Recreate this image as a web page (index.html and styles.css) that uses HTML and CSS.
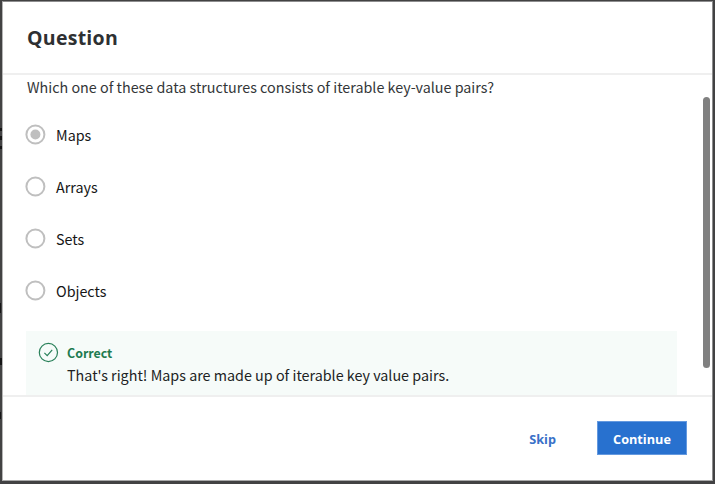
FILE: index.html
```html
<!DOCTYPE html>
<html lang="en">
<head>
<meta charset="utf-8">
<title>Question</title>
<link rel="stylesheet" href="styles.css">
</head>
<body>
<div class="backdrop" aria-hidden="true">
  <i class="mark mark-a"></i>
  <i class="mark mark-b"></i>
  <i class="mark mark-c"></i>
  <i class="mark mark-d"></i>
  <i class="mark mark-e"></i>
  <i class="mark mark-f"></i>
</div>
<section class="modal" role="dialog" aria-labelledby="title">
  <header class="header"><h1 class="title" id="title">Question</h1></header>
  <main class="body">
    <p class="prompt">Which one of these data structures consists of iterable key-value pairs?</p>
    <ul class="options">
      <li class="option"><svg class="radio" viewBox="0 0 21 21" width="21" height="21"><circle class="ring" cx="10.4" cy="10.5" r="9"/><circle class="dot" cx="10.4" cy="10.5" r="5"/></svg><span class="label">Maps</span></li>
      <li class="option"><svg class="radio" viewBox="0 0 21 21" width="21" height="21"><circle class="ring" cx="10.4" cy="10.5" r="9"/></svg><span class="label">Arrays</span></li>
      <li class="option"><svg class="radio" viewBox="0 0 21 21" width="21" height="21"><circle class="ring" cx="10.4" cy="10.5" r="9"/></svg><span class="label">Sets</span></li>
      <li class="option"><svg class="radio" viewBox="0 0 21 21" width="21" height="21"><circle class="ring" cx="10.4" cy="10.5" r="9"/></svg><span class="label">Objects</span></li>
    </ul>
    <div class="feedback">
      <svg class="check" viewBox="0 0 21 21" width="21" height="21"><circle cx="10.4" cy="10.5" r="9.1"/><path d="M6.4 10.8l2.8 2.8 5-5.8"/></svg>
      <div class="message">
        <strong class="verdict">Correct</strong>
        <p class="explain">That's right! Maps are made up of iterable key value pairs.</p>
      </div>
    </div>
    <div class="scrollbar"></div>
  </main>
  <footer class="footer">
    <button class="button skip">Skip</button>
    <button class="button continue">Continue</button>
  </footer>
</section>
</body>
</html>
```
FILE: styles.css
```css
* { box-sizing: border-box; }

body {
  width: 715px;
  height: 484px;
  margin: 0;
  padding: 1px 2px 3px;
  overflow: hidden;
  background: #424243;
  font-family: "Noto Sans CJK SC", "Noto Sans", sans-serif;
}

.backdrop {
  position: absolute;
  top: 0;
  left: 0;
  width: 2px;
  height: 484px;
  overflow: hidden;
}

.mark { position: absolute; left: 0; width: 2px; background: #151516; }
.mark-a { top: 128px; height: 3px; }
.mark-b { top: 136px; height: 4px; }
.mark-c { top: 146px; height: 3px; }
.mark-d { top: 303px; height: 10px; width: 1px; }
.mark-e { top: 358px; height: 7px; }
.mark-f { top: 412px; height: 7px; width: 1px; }

.modal {
  position: relative;
  display: flex;
  flex-direction: column;
  width: 711px;
  height: 480px;
  border: 1px solid #8d8d8e;
  border-left-color: #b5b5b5;
  border-bottom-color: #a9a9a9;
  background: #fff;
}

.header {
  display: flex;
  align-items: center;
  height: 73px;
  padding: 2px 24px 0;
  border-bottom: 2px solid #efefef;
}

.title {
  margin: 0;
  color: #2e3032;
  font: 700 19.5px/28px "Open Sans", sans-serif;
  letter-spacing: .27px;
}

.body {
  position: relative;
  height: 322px;
  padding: 0 34px 0 24px;
  overflow: hidden;
}

.prompt {
  margin: 0;
  color: #333638;
  font-size: 14.34px;
  line-height: 24px;
  white-space: nowrap;
}

.options {
  margin: 9px 0 0;
  padding: 0;
  list-style: none;
}

.option {
  display: flex;
  align-items: center;
  height: 52px;
  margin-left: -2px;
  color: #161616;
  font-size: 14.34px;
}

.radio {
  flex: none;
  margin: 1px 10px 0 0;
}

.ring { fill: none; stroke: #bfbfbf; stroke-width: 2; }
.dot { fill: #bfbfbf; }

.label { line-height: 24px; margin-top: 2px; }

.feedback {
  display: flex;
  width: 651px;
  height: 80px;
  margin: 15px 0 0 -1px;
  padding: 11px 12px;
  background: #f6fbf9;
}

.check {
  flex: none;
  margin-right: 8px;
  fill: none;
  stroke: #2a815a;
  stroke-width: 1.2;
}

.verdict {
  display: block;
  color: #1e7b51;
  font-size: 12.4px;
  font-weight: 700;
  line-height: 22px;
}

.explain {
  margin: -1px 0 0;
  color: #202223;
  font-size: 14.34px;
  line-height: 24px;
  white-space: nowrap;
}

.scrollbar {
  position: absolute;
  top: 22px;
  right: 2px;
  width: 7px;
  height: 271px;
  border-radius: 4px;
  background: #808080;
}

.footer {
  display: flex;
  align-items: center;
  justify-content: flex-end;
  height: 85px;
  flex: none;
  padding: 0 25px 1px 0;
  border-top: 2px solid #efefef;
}

.button {
  height: 34px;
  padding: 2px 0 0;
  border: 0;
  font: 700 12.7px/32px "Open Sans", sans-serif;
}

.skip { margin-right: 41px; background: none; color: #3971c8; }
.continue { width: 90px; border: 1px solid #6499df; background: #2871cf; color: #fff; line-height: 30px; }
```
